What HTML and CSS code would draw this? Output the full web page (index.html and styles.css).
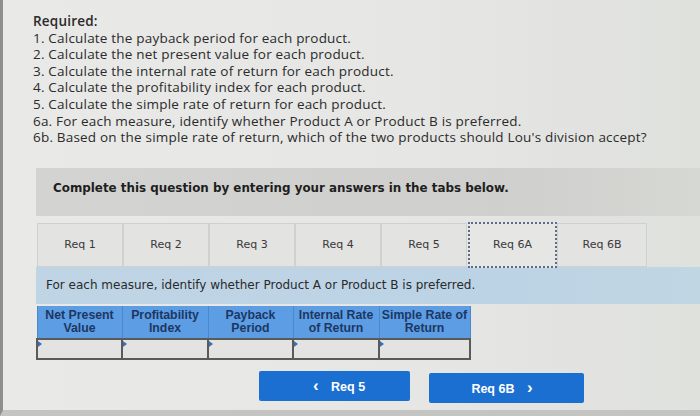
FILE: index.html
```html
<!DOCTYPE html>
<html lang="en">
<head>
  <meta charset="UTF-8" />
  <meta name="viewport" content="width=device-width, initial-scale=1.0" />
  <title>Required</title>
  <link rel="stylesheet" href="styles.css">
</head>
<body>
  <div class="page">
    <section class="required">
      <p class="req-title">Required:</p>
      <p>1. Calculate the payback period for each product.</p>
      <p>2. Calculate the net present value for each product.</p>
      <p>3. Calculate the internal rate of return for each product.</p>
      <p>4. Calculate the profitability index for each product.</p>
      <p>5. Calculate the simple rate of return for each product.</p>
      <p>6a. For each measure, identify whether Product A or Product B is preferred.</p>
      <p>6b. Based on the simple rate of return, which of the two products should Lou's division accept?</p>
    </section>

    <div class="question-box">Complete this question by entering your answers in the tabs below.</div>

    <div class="tabs">
      <div class="tab">Req 1</div>
      <div class="tab">Req 2</div>
      <div class="tab">Req 3</div>
      <div class="tab">Req 4</div>
      <div class="tab">Req 5</div>
      <div class="tab tab-active">Req 6A</div>
      <div class="tab tab-last">Req 6B</div>
    </div>

    <div class="panel">For each measure, identify whether Product A or Product B is preferred.</div>

    <table class="answer-table">
      <thead>
        <tr>
          <th class="c1">Net Present<br>Value</th>
          <th class="c2">Profitability<br>Index</th>
          <th class="c3">Payback<br>Period</th>
          <th class="c4">Internal Rate<br>of Return</th>
          <th class="c5">Simple Rate of<br>Return</th>
        </tr>
      </thead>
      <tbody>
        <tr>
          <td><span class="marker"></span></td>
          <td><span class="marker"></span></td>
          <td><span class="marker"></span></td>
          <td><span class="marker"></span></td>
          <td><span class="marker"></span></td>
        </tr>
      </tbody>
    </table>

    <div class="nav">
      <button class="nav-btn nav-prev"><span class="chev">&lsaquo;</span> Req 5</button>
      <button class="nav-btn nav-next">Req 6B <span class="chev">&rsaquo;</span></button>
    </div>
  </div>
</body>
</html>
```

FILE: styles.css
```css
html, body {
  margin: 0;
  padding: 0;
}

body {
  width: 700px;
  height: 416px;
  overflow: hidden;
  background: linear-gradient(to right, #e9e9e7 0%, #e6e6e4 60%, #dfe1dd 100%);
  font-family: "Open Sans", Lato, sans-serif;
  color: #2b2b2b;
}

.page {
  height: 410px;
  border-left: 3px solid #8e8e8c;
  border-bottom: 6px solid #c4c4c2;
}

.required {
  padding: 13px 0 0 30px;
}

.required p {
  margin: 0;
  font-size: 13.5px;
  line-height: 16.6px;
  letter-spacing: 0.2px;
}

.req-title {
  font-weight: 600;
}

.question-box {
  margin: 22px 0 0 33px;
  height: 48px;
  box-sizing: border-box;
  padding: 12px 0 0 17px;
  background: linear-gradient(to right, #d3d3d1 0%, #cfcfcd 70%, #d6d8d3 100%);
  font-family: "DejaVu Sans", Verdana, sans-serif;
  font-weight: bold;
  font-size: 11.9px;
  line-height: 16px;
  color: #1e1e1e;
}

.tabs {
  display: flex;
  margin: 7px 0 0 34px;
  height: 44px;
}

.tab {
  width: 86px;
  box-sizing: border-box;
  border: 1px solid #d0d0ce;
  background: #e3e3e1;
  display: flex;
  align-items: center;
  justify-content: center;
  font-family: "DejaVu Sans", Verdana, sans-serif;
  font-size: 11px;
  color: #3a3a3a;
}

.tab-active {
  width: 89px;
  margin-left: 1px;
  border: 2px dotted #5d6b8c;
  background: #e6e6e4;
  height: 46px;
  margin-top: -1px;
}

.tab-last {
  width: 90px;
}

.panel {
  margin-left: 33px;
  height: 37px;
  box-sizing: border-box;
  padding: 10px 0 0 10px;
  background: linear-gradient(to right, #bfd5e6 0%, #bcd3e5 70%, #c1d6e3 100%);
  font-family: "DejaVu Sans", Verdana, sans-serif;
  font-size: 12px;
  line-height: 16px;
  color: #2a2a2a;
}

.answer-table {
  margin: 2px 0 0 33px;
  border-collapse: collapse;
  table-layout: fixed;
  width: 428px;
}

.answer-table th {
  background: #5c9de3;
  border-left: 1px solid #4d88c9;
  border-right: 1px solid #4d88c9;
  height: 32px;
  padding: 0;
  font-family: "Liberation Sans", Arial, sans-serif;
  font-weight: bold;
  font-size: 12.3px;
  line-height: 13px;
  color: #1d3763;
  vertical-align: middle;
}

.c1 { width: 84px; }
.c2 { width: 85px; }
.c3 { width: 84px; }
.c4 { width: 85px; }
.c5 { width: 90px; }

.answer-table td {
  height: 18px;
  padding: 0;
  background: #e3e3e1;
  border: 2px solid #5a5a5a;
  position: relative;
}

.marker {
  position: absolute;
  left: 0;
  top: 1px;
  width: 0;
  height: 0;
  border-top: 3px solid transparent;
  border-bottom: 3px solid transparent;
  border-left: 4px solid #3d6fb5;
}

.nav {
  display: flex;
  gap: 19px;
  margin: 11px 0 0 256px;
}

.nav-btn {
  height: 30px;
  border: none;
  border-radius: 2px;
  background: #1b6fd1;
  color: #fff;
  font-family: "Liberation Sans", Arial, sans-serif;
  font-weight: bold;
  font-size: 12.5px;
  padding: 0;
}

.nav-prev {
  width: 151px;
}

.nav-next {
  width: 155px;
  margin-top: 2px;
}

.chev {
  font-size: 17px;
  font-weight: bold;
  margin: 0 9px;
}
```
